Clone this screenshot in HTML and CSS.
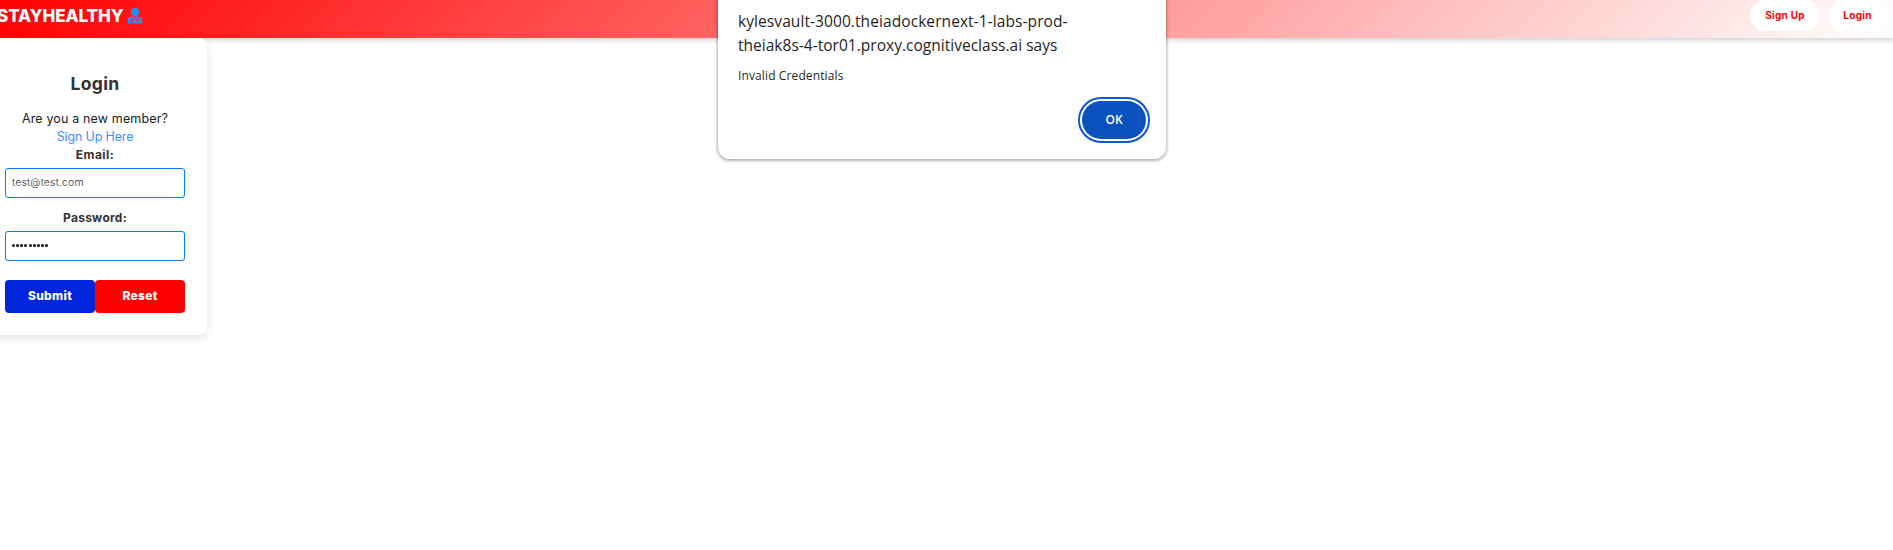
FILE: index.html
```html
<!DOCTYPE html>
<html lang="en">
<head>
<meta charset="utf-8">
<title>StayHealthy - Login</title>
<link rel="stylesheet" href="styles.css">
</head>
<body>
<header class="navbar">
  <a class="brand"><span class="brand-name">STAYHEALTHY</span>
    <svg class="doctor" viewBox="0 0 16 16"><circle cx="8" cy="4" r="4" fill="#1e90ff"/><path d="M4.500 8.600h7Q15.400 9 15.400 13v1.300q0 1.200-1.300 1.200H2Q.6 15.500.6 14.300V13Q.6 9 4.500 8.600Z" fill="#2f88f4"/><path d="M4.700 8.600v3.300M11.300 8.600v2.200M9.500 14v-1.400q0-1.800 1.800-1.800t1.800 1.800V14M8 9v3" fill="none" stroke="#e02c5c" stroke-width="1.200"/><circle cx="4.700" cy="12.900" r="1.200" fill="none" stroke="#e02c5c"/></svg>
  </a>
  <nav class="links"><a class="pill signup"><span>Sign Up</span></a><a class="pill login"><span>Login</span></a></nav>
</header>
<main class="card">
  <h1 class="title">Login</h1>
  <p class="hint">Are you a new member?</p>
  <p class="hint"><a class="link">Sign Up Here</a></p>
  <form class="form">
    <label class="label email">Email:</label>
    <div class="field value">test@test.com</div>
    <label class="label password">Password:</label>
    <div class="field dots"><i></i><i></i><i></i><i></i><i></i><i></i><i></i><i></i><i></i></div>
    <div class="actions"><button type="button" class="btn submit">Submit</button><button type="button" class="btn reset">Reset</button></div>
  </form>
</main>
<section class="dialog" role="alertdialog">
  <h2 class="origin"><span class="line-one">kylesvault-3000.theiadockernext-1-labs-prod-</span><br><span class="line-two">theiak8s-4-tor01.proxy.cognitiveclass.ai says</span></h2>
  <p class="message">Invalid Credentials</p>
  <button type="button" class="ok">OK</button>
</section>
</body>
</html>
```
FILE: styles.css
```css
* { box-sizing: border-box; margin: 0; padding: 0; }
body { height: 550px; overflow: hidden; background: #fff; font-family: Inter, "Open Sans", sans-serif; color: #333; }
.navbar { height: 38px; display: flex; justify-content: space-between; background: linear-gradient(135deg, #f00, #fff); box-shadow: 0 2px 5px rgba(0,0,0,.2); }
.brand { display: flex; margin-left: -3px; color: #fff; font-size: 17px; font-weight: 800; line-height: 32px; }
.brand-name { width: 130px; white-space: nowrap; letter-spacing: -.05px; }
.doctor { width: 16px; height: 16px; margin-top: 7.500px; }
.links { display: flex; gap: 8px; margin-right: 6px; }
.pill { height: 31px; border-radius: 16px; background: #fff; color: #f00; font-size: 10px; font-weight: 700; line-height: 31px; text-align: center; letter-spacing: .25px; }
.signup { width: 70px; }
.login { width: 59px; }
.card { width: 227px; height: 297px; margin-left: -20px; padding: 32px 22px 0 25px; border-radius: 8px; background: #fff; box-shadow: 0 4px 8px rgba(0,0,0,.1); text-align: center; position: relative; }
.title { height: 40px; font-size: 17.500px; line-height: 28px; font-weight: 700; letter-spacing: .3px; }
.hint { height: 18px; font-size: 12.500px; line-height: 18px; white-space: nowrap; color: #222; letter-spacing: .15px; }
.link { color: #3f8cff; letter-spacing: -.15px; }
.label { display: block; height: 22px; font-size: 12px; line-height: 18px; font-weight: 700; letter-spacing: .25px; }
.email { letter-spacing: .5px; }
.field { height: 30px; border: 1px solid #007bff; border-radius: 3px; background: #fff; padding-left: 6px; }
.value { margin-bottom: 11px; text-align: left; font-size: 10.500px; font-weight: 300; line-height: 28px; color: #333; letter-spacing: .15px; }
.dots { display: flex; align-items: center; gap: 1.150px; padding-bottom: 1px; }
.dots i { width: 3px; height: 3px; border-radius: 50%; background: #111; }
.actions { display: flex; margin-top: 19px; }
.btn { width: 90px; height: 33px; padding-bottom: 2px; border: 0; border-radius: 4px; color: #fff; font: 800 12px/31px Inter, sans-serif; letter-spacing: .3px; }
.submit { background: #0026dc; }
.reset { background: #f00; }
.dialog { position: absolute; left: 718px; top: -16px; width: 448px; height: 175px; padding: 25px 16px 0 20px; border-radius: 12px; background: #fff; box-shadow: 0 1px 3px 1px rgba(0,0,0,.3); color: #1f1f1f; display: flex; flex-direction: column; font-family: "Open Sans", sans-serif; }
.origin { font-size: 15.500px; line-height: 24px; font-weight: 500; white-space: nowrap; }
.line-one { letter-spacing: .08px; }
.line-two { letter-spacing: .02px; }
.message { margin-top: 9px; font-size: 12px; line-height: 19px; letter-spacing: .12px; }
.ok { align-self: flex-end; width: 64px; height: 38px; margin: 16px 4px 0 0; border: 0; border-radius: 19px; background: #0b51be; color: #fff; font: 600 12px/38px "Open Sans", sans-serif; outline: 2px solid #0b57d0; outline-offset: 2px; }
```
